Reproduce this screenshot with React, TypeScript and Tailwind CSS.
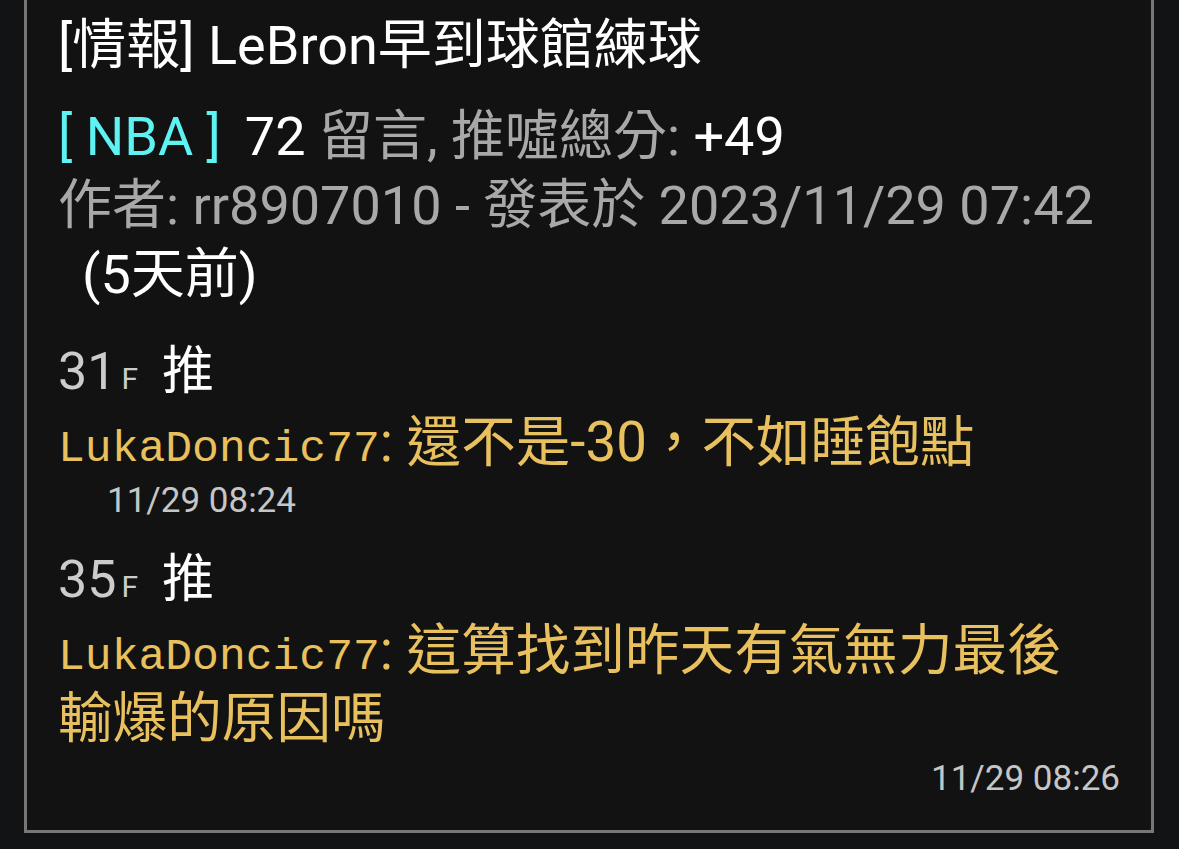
import React from 'react';

const sans = 'font-["Roboto","Noto_Sans_CJK_TC",sans-serif]';

type Push = {
  floor: number;
  tag: string;
  user: string;
  text: React.ReactNode;
  time: string;
  timeRight?: boolean;
};

const pushes: Push[] = [
  { floor: 31, tag: '推', user: 'LukaDoncic77', text: '還不是-30，不如睡飽點', time: '11/29 08:24' },
  {
    floor: 35,
    tag: '推',
    user: 'LukaDoncic77',
    text: (
      <>
        這算找到昨天有氣無力最後
        <br />
        輸爆的原因嗎
      </>
    ),
    time: '11/29 08:26',
    timeRight: true,
  },
];

function PushItem({ p, first }: { p: Push; first: boolean }) {
  return (
    <div className={first ? 'mt-[27px]' : 'mt-[19px]'}>
      <div className="h-[70px] whitespace-nowrap pt-[10px] leading-[70px]">
        <span className="text-[52px] leading-none text-[#cccccc]">{p.floor}</span>
        <span className="ml-[5px] text-[30px] leading-none text-[#cccccc]">F</span>
        <span className="ml-[24px] text-[52px] leading-none text-white">{p.tag}</span>
      </div>
      <div className="mt-[2px] text-[54.6px] leading-[68px] text-[#e8c15e]">
        <span className='font-["Liberation_Mono",monospace] text-[44.7px] leading-none'>{p.user}</span>
        <span>: </span>
        <span>{p.text}</span>
      </div>
      <div
        className={
          p.timeRight
            ? 'mt-[3px] text-right text-[35px] leading-[48px] text-[#c6c6c6]'
            : 'mt-[1px] pl-[49px] text-[35px] leading-[48px] text-[#c6c6c6]'
        }
      >
        {p.time}
      </div>
    </div>
  );
}

export default function App() {
  return (
    <div className={`${sans} min-h-[849px] w-full bg-[#121314] pl-[24px]`}>
      <div className="w-[1130px] border-x-[3px] border-b-[3px] border-t-0 border-[#777777] bg-[#121212] pl-[31px] pr-[31px] pt-[11px] pb-[27px]">
        <h1 className="whitespace-nowrap text-[54px] font-normal leading-[70px] text-white">[情報] LeBron早到球館練球</h1>
        <div className="mt-[21px] text-[54px] leading-[69px]">
          <div className="whitespace-nowrap">
            <span className="text-[#5ff2f2]">[ NBA ]</span>
            <span className="ml-[24px] text-white">72 </span>
            <span className="text-[#a8a8a8]">留言, 推噓總分: </span>
            <span className="text-white">+49</span>
          </div>
          <div className="whitespace-nowrap text-[#a8a8a8]">作者: rr8907010 - 發表於 2023/11/29 07:42</div>
          <div className="pl-[24px] text-white">(5天前)</div>
        </div>
        {pushes.map((p, i) => (
          <PushItem key={p.floor} p={p} first={i === 0} />
        ))}
      </div>
    </div>
  );
}
